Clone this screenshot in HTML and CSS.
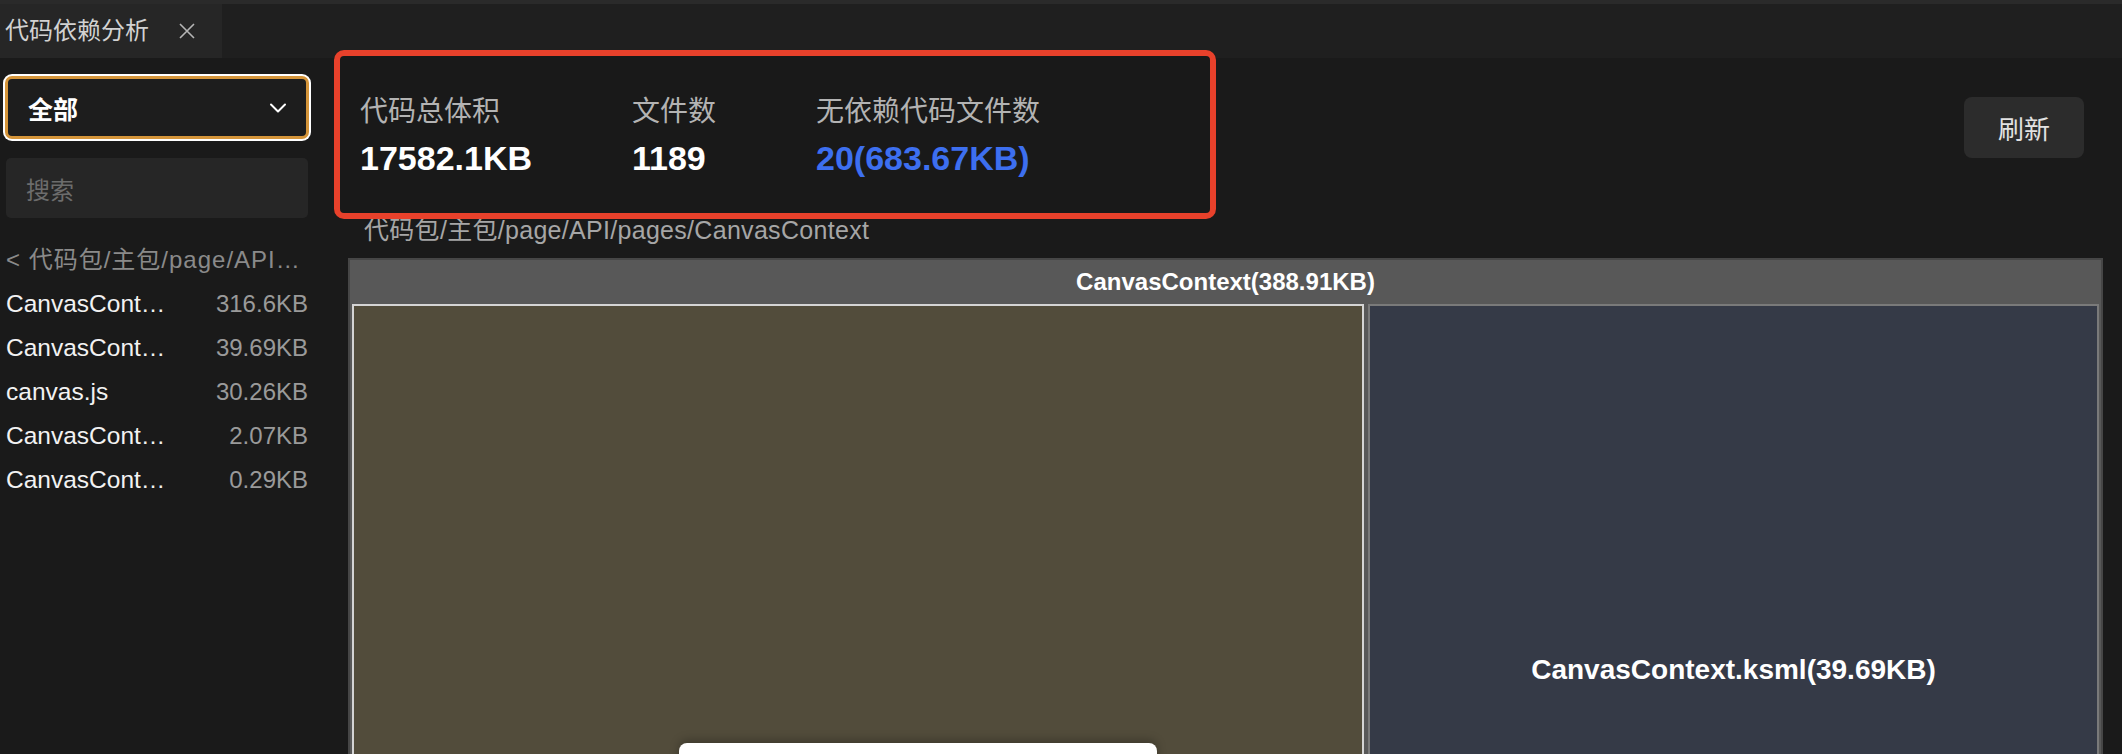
FILE: index.html
```html
<!DOCTYPE html>
<html lang="zh-CN">
<head>
<meta charset="utf-8">
<title>代码依赖分析</title>
<link rel="stylesheet" href="styles.css">
</head>
<body>
<div class="tabbar">
  <div class="tab">
    <span class="tab-title">代码依赖分析</span>
    <svg class="tab-close" width="18" height="18" viewBox="0 0 18 18"><path d="M2 2 L16 16 M16 2 L2 16" stroke="#b5b5b5" stroke-width="1.6" fill="none"/></svg>
  </div>
</div>
<div class="layout">
  <aside class="sidebar">
    <div class="select">
      <span class="select-text">全部</span>
      <svg class="select-arrow" width="18" height="10" viewBox="0 0 18 10"><path d="M2 1.5 L9 8.5 L16 1.5" stroke="#ffffff" stroke-width="2" fill="none" stroke-linecap="round" stroke-linejoin="round"/></svg>
    </div>
    <div class="search">搜索</div>
    <div class="crumb">&lt; 代码包/主包/page/API/pages/CanvasContext</div>
    <ul class="files">
      <li class="file"><span class="file-name">CanvasContext.js</span><span class="file-size">316.6KB</span></li>
      <li class="file"><span class="file-name">CanvasContext.ksml</span><span class="file-size">39.69KB</span></li>
      <li class="file"><span class="file-name">canvas.js</span><span class="file-size">30.26KB</span></li>
      <li class="file"><span class="file-name">CanvasContext.css</span><span class="file-size">2.07KB</span></li>
      <li class="file"><span class="file-name">CanvasContext.json</span><span class="file-size">0.29KB</span></li>
    </ul>
  </aside>
  <main class="main">
    <div class="header">
      <div class="stats">
        <div class="stat">
          <div class="stat-label">代码总体积</div>
          <div class="stat-value">17582.1KB</div>
        </div>
        <div class="stat">
          <div class="stat-label">文件数</div>
          <div class="stat-value">1189</div>
        </div>
        <div class="stat">
          <div class="stat-label">无依赖代码文件数</div>
          <div class="stat-value stat-blue">20(683.67KB)</div>
        </div>
      </div>
      <button class="refresh">刷新</button>
    </div>
    <div class="path">代码包/主包/page/API/pages/CanvasContext</div>
    <div class="treemap">
      <div class="tm-head">CanvasContext(388.91KB)</div>
      <div class="tm-body">
        <div class="tm-node tm-left">
          <div class="tooltip"></div>
        </div>
        <div class="tm-node tm-right">
          <span class="tm-label">CanvasContext.ksml(39.69KB)</span>
        </div>
      </div>
    </div>
  </main>
</div>
</body>
</html>
```

FILE: styles.css
```css
* { box-sizing: border-box; }

html, body {
  margin: 0;
  padding: 0;
}

body {
  width: 2122px;
  height: 754px;
  overflow: hidden;
  background: #1a1a1a;
  color: #ffffff;
  font-family: "Liberation Sans", "Noto Sans CJK SC", sans-serif;
}

/* tab bar */
.tabbar {
  height: 58px;
  border-top: 4px solid #2a2a2a;
  background: #1f1f1f;
  display: flex;
}

.tab {
  width: 222px;
  background: #262626;
  display: flex;
  align-items: center;
  padding-left: 5px;
}

.tab-title {
  font-size: 24px;
  color: #d2d2d2;
  line-height: 1;
}

.tab-close {
  margin-left: auto;
  margin-right: 26px;
}

/* layout */
.layout {
  display: flex;
  height: 696px;
}

.sidebar {
  flex: none;
  width: 320px;
  min-width: 0;
  padding: 18px 11px 0 5px;
  overflow: hidden;
}

.select {
  height: 63px;
  border: 3px solid #d5953a;
  border-radius: 7px;
  box-shadow: 0 0 0 2px #ffffff;
  background: #1d1d1d;
  display: flex;
  align-items: center;
  padding: 0 19px 0 20px;
}

.select-text {
  font-size: 25px;
  font-weight: bold;
  color: #ffffff;
}

.select-arrow {
  margin-left: auto;
}

.search {
  margin: 19px 1px 0;
  height: 60px;
  background: #262626;
  border-radius: 5px;
  padding-left: 20px;
  display: flex;
  align-items: center;
  font-size: 24px;
  color: #6c6c6c;
}

.crumb {
  margin-top: 20px;
  padding: 0 8px 0 1px;
  height: 44px;
  line-height: 44px;
  font-size: 24px;
  letter-spacing: 1px;
  color: #8a8a8a;
  white-space: nowrap;
  overflow: hidden;
  text-overflow: ellipsis;
}

.files {
  list-style: none;
  margin: 0;
  padding: 0 1px;
}

.file {
  display: flex;
  align-items: center;
  height: 44px;
  font-size: 24px;
}

.file-name {
  width: 160px;
  font-size: 24.5px;
  color: #f2f2f2;
  white-space: nowrap;
  overflow: hidden;
  text-overflow: ellipsis;
}

.file-size {
  margin-left: auto;
  color: #9a9a9a;
}

/* main */
.main {
  flex: 1;
  display: flex;
  flex-direction: column;
  min-width: 0;
}

.header {
  display: flex;
  justify-content: space-between;
  margin-top: -8px;
  padding: 0 38px 0 14px;
  position: relative;
}

.stats {
  width: 882px;
  height: 169px;
  border: 6px solid #e8412b;
  border-radius: 10px;
  background: #191919;
  display: flex;
  align-items: center;
  gap: 100px;
  padding: 4px 0 0 20px;
}

.stat-label {
  font-size: 28px;
  line-height: 40px;
  color: #b3b3b3;
}

.stat-value {
  margin-top: 3px;
  font-size: 34px;
  line-height: 46px;
  font-weight: bold;
  color: #ffffff;
}

.stat-blue {
  color: #3d6ff0;
}

.refresh {
  align-self: flex-start;
  margin-top: 47px;
  width: 120px;
  height: 61px;
  border: none;
  border-radius: 8px;
  background: #2c2c2c;
  color: #e2e2e2;
  font-family: "Liberation Sans", "Noto Sans CJK SC", sans-serif;
  font-size: 26px;
  padding: 0;
}

.path {
  padding-left: 44px;
  height: 22px;
  line-height: 22px;
  font-size: 25px;
  letter-spacing: 0.3px;
  color: #a6a6a6;
  white-space: nowrap;
}

/* treemap */
.treemap {
  margin: 17px 19px 0 28px;
  border: 2px solid #464646;
  background: #585858;
  flex: none;
}

.tm-head {
  height: 44px;
  line-height: 44px;
  text-align: center;
  font-size: 24px;
  font-weight: bold;
  color: #ffffff;
}

.tm-body {
  display: flex;
  gap: 4px;
  padding: 0 2px;
  height: 734px;
}

.tm-node {
  height: 732px;
}

.tm-left {
  flex: 0 0 1012px;
  border: 2px solid #d4d4d4;
  background: #524c3b;
  position: relative;
}

.tm-right {
  flex: 1;
  border: 2px solid #7a7a7a;
  background: #353a47;
  display: flex;
  align-items: center;
  justify-content: center;
}

.tm-label {
  font-size: 28px;
  font-weight: bold;
  color: #ffffff;
}

.tooltip {
  position: absolute;
  left: 325px;
  top: 437px;
  width: 478px;
  height: 80px;
  background: #ffffff;
  border-radius: 8px;
  box-shadow: 0 -3px 10px rgba(0, 0, 0, 0.25);
}
```
